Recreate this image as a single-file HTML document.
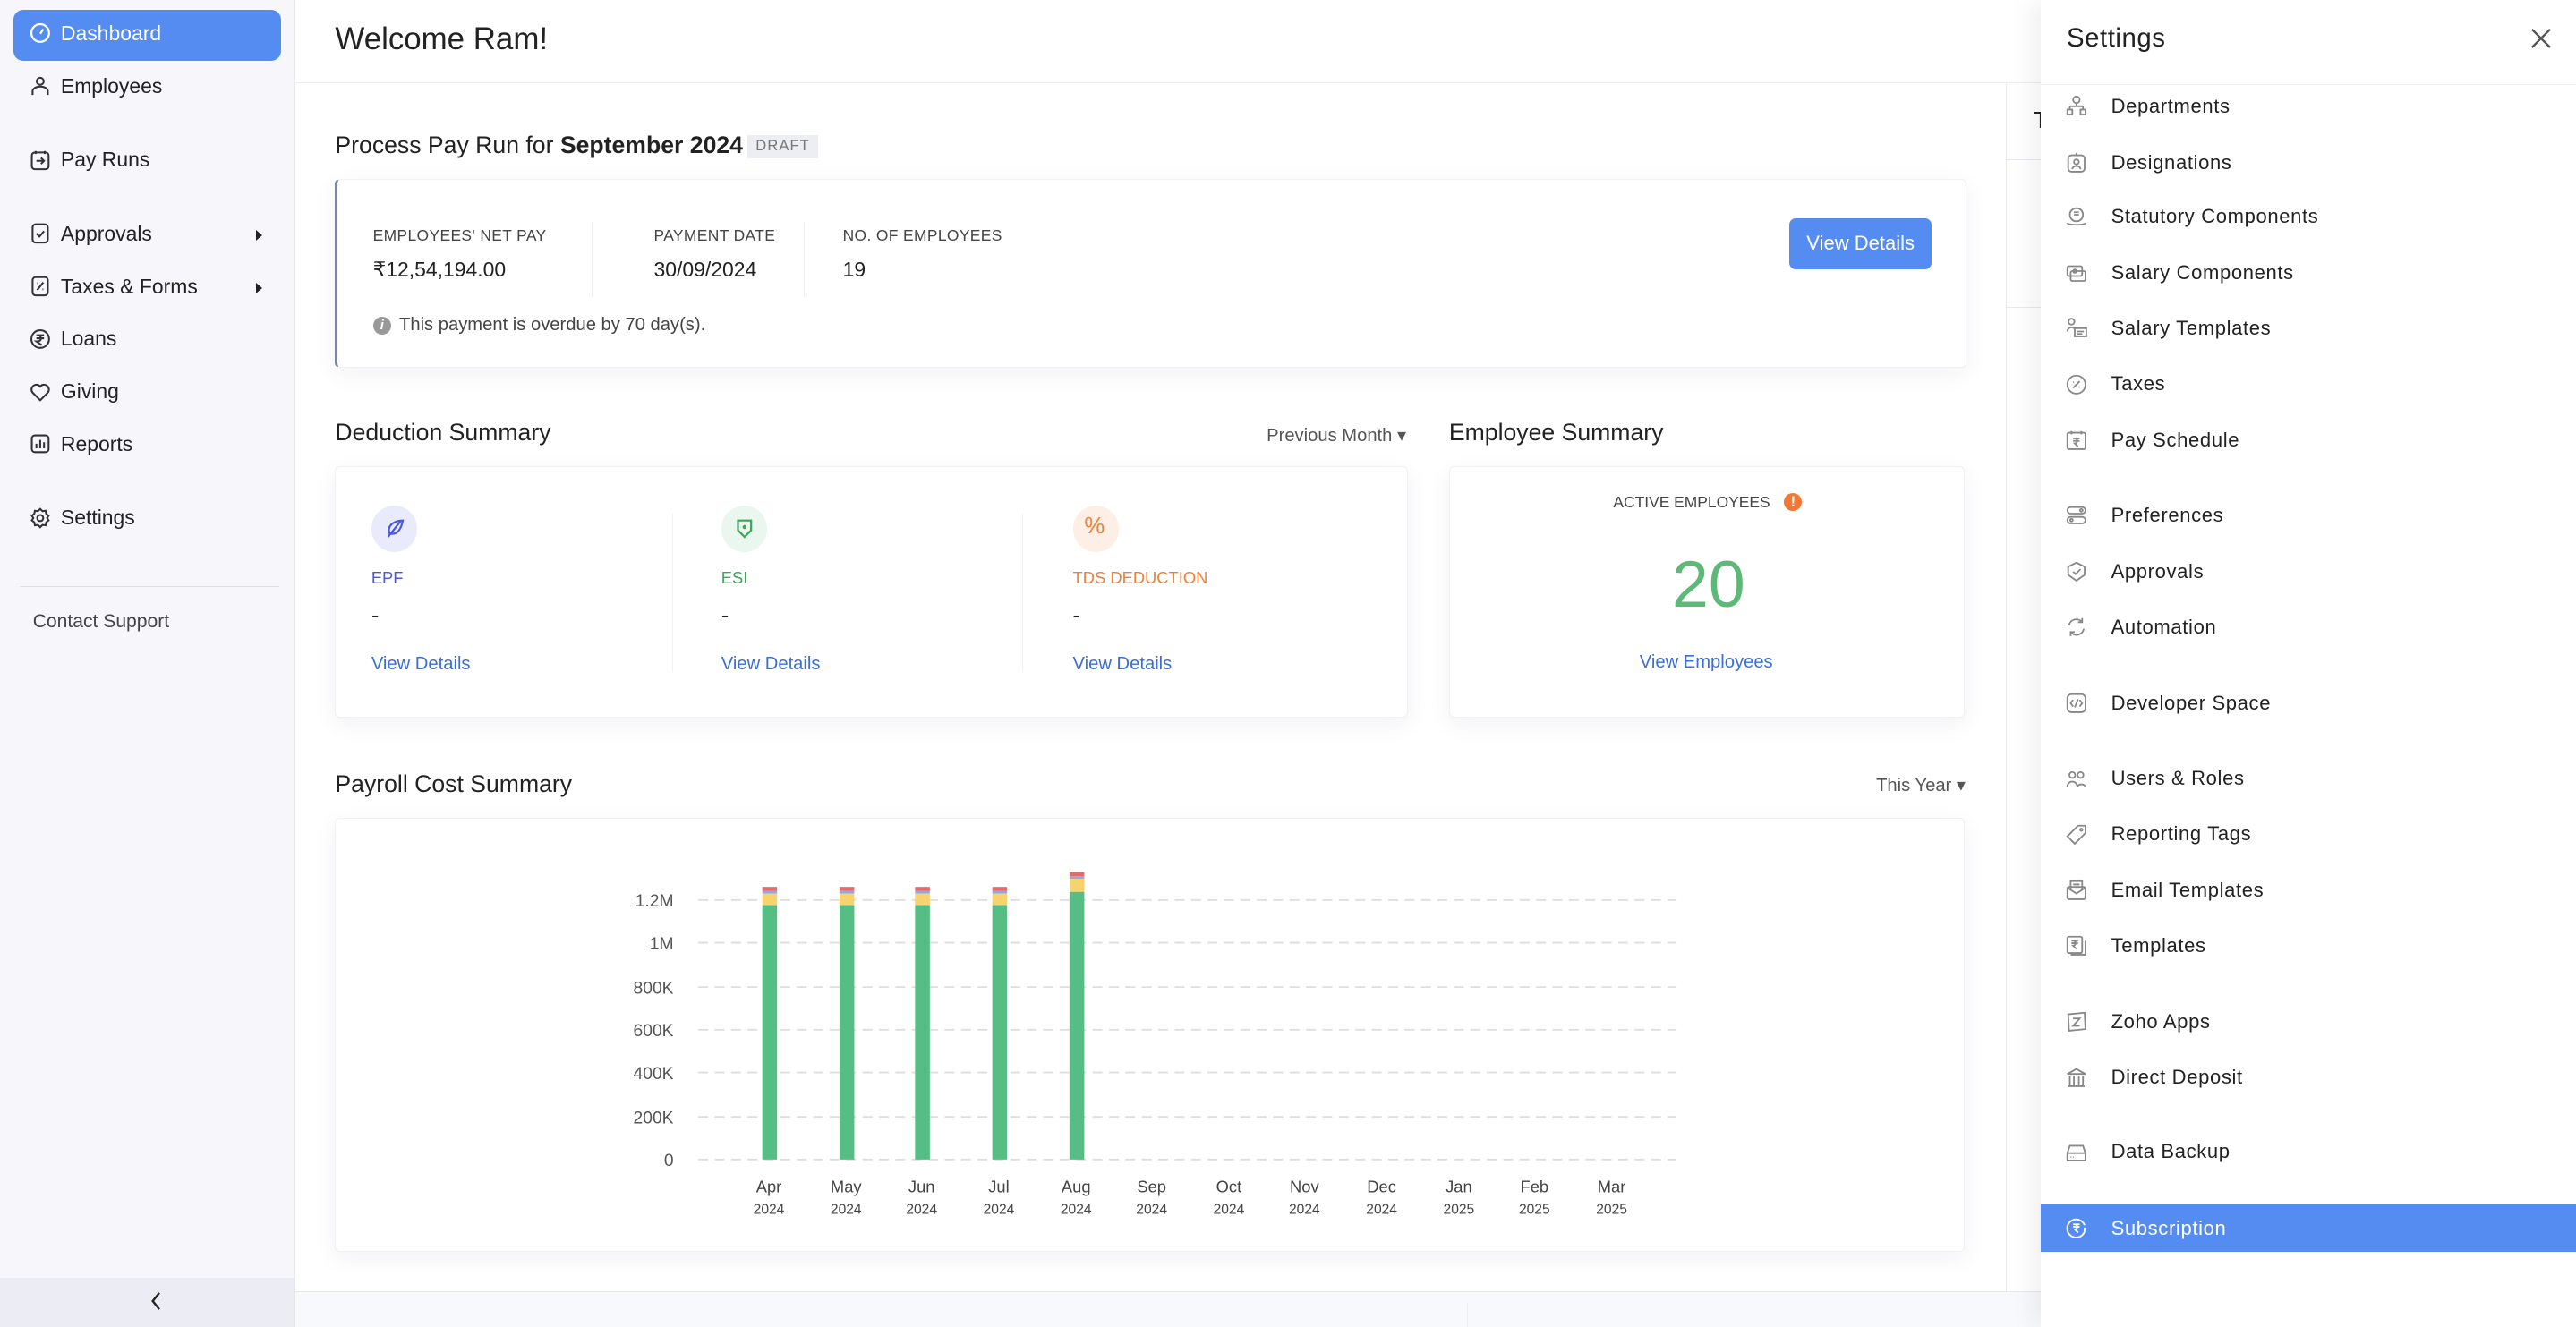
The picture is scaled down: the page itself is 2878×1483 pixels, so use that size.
<!DOCTYPE html>
<html><head><meta charset="utf-8">
<style>
html,body{margin:0;padding:0;}
body{width:2878px;height:1482px;overflow:hidden;background:#fff;font-family:"Liberation Sans",sans-serif;}
#z{zoom:1.83546;width:1568px;height:808px;position:relative;overflow:hidden;color:#222;}
.a{position:absolute;white-space:nowrap;}
.side{left:0;top:0;width:179px;height:808px;background:#f6f6fb;border-right:1px solid #e6e7ee;}
.nav{position:absolute;left:20px;font-size:12.5px;color:#222;display:flex;align-items:center;}
.nav svg{width:13px;height:13px;margin-right:6px;}
.arr{position:absolute;left:156px;width:0;height:0;border-left:4px solid #222;border-top:3.5px solid transparent;border-bottom:3.5px solid transparent;}
.card{position:absolute;background:#fff;border-radius:3px;box-shadow:0 4px 14px rgba(30,40,90,0.06);border:1px solid #f0f1f5;}
.lbl{font-size:9.5px;color:#444;letter-spacing:.2px;}
.val{font-size:12.5px;color:#222;}
.link{font-size:11px;color:#3a6fd8;}
.h2{font-size:14.5px;color:#222;}
.sp{position:absolute;left:0;width:326px;font-size:12px;color:#222;letter-spacing:.35px;display:flex;align-items:center;height:30px;}
.sp svg{position:absolute;left:15px;width:14px;height:14px;}
.sp span{position:absolute;left:43px;}
</style></head><body><div id="z">

<div class="a side"></div>
<div class="a" style="left:8px;top:6px;width:163px;height:31px;background:#558cf1;border-radius:6px;"></div>
<div class="nav" style="top:13px;left:18px;color:#fff"><svg viewBox="0 0 14 14" fill="none" stroke="#fff" stroke-width="1.3"><circle cx="7" cy="7" r="5.8"/><path d="M7 7.5 9 4.5"/></svg>Dashboard</div>
<div class="nav" style="top:45px;left:18px"><svg viewBox="0 0 14 14" fill="none" stroke="#333" stroke-width="1.2"><circle cx="7" cy="4" r="2.3"/><path d="M2 13v-2.5a5 3 0 0 1 10 0V13"/></svg>Employees</div>
<div class="nav" style="top:90px;left:18px"><svg viewBox="0 0 14 14" fill="none" stroke="#333" stroke-width="1.2"><rect x="1.5" y="2" width="11" height="11" rx="2"/><path d="M4 1v2M10 1v2M4.5 7.5h5M7.5 5.5l2 2-2 2"/></svg>Pay Runs</div>
<div class="nav" style="top:135px;left:18px"><svg viewBox="0 0 14 14" fill="none" stroke="#333" stroke-width="1.2"><rect x="2" y="1" width="10" height="12" rx="2"/><path d="M4.5 7l2 2 3-3.5"/></svg>Approvals</div><div class="arr" style="top:140px"></div>
<div class="nav" style="top:167px;left:18px"><svg viewBox="0 0 14 14" fill="none" stroke="#333" stroke-width="1.2"><rect x="2" y="1" width="10" height="12" rx="2"/><path d="M5 9.5l4-5M5 5h.5M8.5 9h.5"/></svg>Taxes &amp; Forms</div><div class="arr" style="top:172px"></div>
<div class="nav" style="top:199px;left:18px"><svg viewBox="0 0 14 14" fill="none" stroke="#333" stroke-width="1.2"><circle cx="7" cy="7" r="5.8"/><path d="M4.5 4.5h5M4.5 6.5h5M5.5 4.5a2 2 0 0 1 0 4H4.5l3.5 2.5"/></svg>Loans</div>
<div class="nav" style="top:231px;left:18px"><svg viewBox="0 0 14 14" fill="none" stroke="#333" stroke-width="1.2"><path d="M7 12.5 2 7.5a3 3 0 0 1 5-4 3 3 0 0 1 5 4z"/></svg>Giving</div>
<div class="nav" style="top:263px;left:18px"><svg viewBox="0 0 14 14" fill="none" stroke="#333" stroke-width="1.2"><rect x="1.5" y="1.5" width="11" height="11" rx="2"/><path d="M4.5 10V7M7 10V4.5M9.5 10V6"/></svg>Reports</div>
<div class="nav" style="top:308px;left:18px"><svg viewBox="0 0 14 14" fill="none" stroke="#333" stroke-width="1.2"><circle cx="7" cy="7" r="2"/><path d="M7 1l1.5 1.5 2-.3.4 2 1.6 1.3-1 1.5 1 1.5-1.6 1.3-.4 2-2-.3L7 13l-1.5-1.5-2 .3-.4-2L1.5 8.5l1-1.5-1-1.5 1.6-1.3.4-2 2 .3z"/></svg>Settings</div>
<div class="a" style="left:12px;top:357px;width:158px;border-top:1px solid #dfe0e8"></div>
<div class="a" style="left:20px;top:372px;font-size:11.5px;color:#444">Contact Support</div>
<div class="a" style="left:0;top:778px;width:179px;height:30px;background:#ececf4;border-right:1px solid #e6e7ee"></div>
<svg class="a" style="left:91px;top:786px" width="8" height="12" viewBox="0 0 8 12" fill="none" stroke="#222" stroke-width="1.3"><path d="M6 1 2 6l4 5"/></svg>

<div class="a" style="left:204px;top:13px;font-size:19px;color:#222">Welcome Ram!</div>
<div class="a" style="left:180px;top:50px;width:1062px;border-top:1px solid #ececf1"></div>
<div class="a" style="left:1221px;top:51px;height:735px;border-left:1px solid #e8e8ee"></div>
<div class="a" style="left:1221px;top:97px;width:21px;border-top:1px solid #e8e8ee"></div>
<div class="a" style="left:1221px;top:187px;width:21px;border-top:1px solid #e8e8ee"></div>
<div class="a" style="left:1238px;top:66px;font-size:14px;color:#222">T</div>

<div class="a" style="left:204px;top:80px;font-size:14.5px;color:#222">Process Pay Run for <b style="font-weight:600">September 2024</b></div>
<div class="a" style="left:455px;top:82px;padding:2px 5px;background:#eceef3;color:#777;font-size:9px;letter-spacing:.6px">DRAFT</div>
<div class="card" style="left:204px;top:109px;width:991px;height:114px;border-left:2px solid #7c869c;"></div>
<div class="a lbl" style="left:227px;top:138px">EMPLOYEES' NET PAY</div>
<div class="a val" style="left:227px;top:157px">₹12,54,194.00</div>
<div class="a" style="left:360px;top:135px;height:46px;border-left:1px solid #eceef2"></div>
<div class="a lbl" style="left:398px;top:138px">PAYMENT DATE</div>
<div class="a val" style="left:398px;top:157px">30/09/2024</div>
<div class="a" style="left:489px;top:135px;height:46px;border-left:1px solid #eceef2"></div>
<div class="a lbl" style="left:513px;top:138px">NO. OF EMPLOYEES</div>
<div class="a val" style="left:513px;top:157px">19</div>
<div class="a" style="left:1089px;top:133px;width:87px;height:31px;background:#558cf1;border-radius:4px;color:#fff;font-size:12px;line-height:31px;text-align:center">View Details</div>
<div class="a" style="left:227px;top:193px;width:11px;height:11px;border-radius:50%;background:#999;color:#fff;font-size:8px;line-height:11px;text-align:center;font-style:italic;font-weight:bold">i</div>
<div class="a" style="left:243px;top:192px;font-size:11px;color:#444">This payment is overdue by 70 day(s).</div>

<div class="a h2" style="left:204px;top:255px">Deduction Summary</div>
<div class="a" style="left:771px;top:258px;font-size:11px;color:#555">Previous Month ▾</div>
<div class="card" style="left:204px;top:284px;width:652px;height:152px"></div>
<div class="a" style="left:409px;top:313px;height:96px;border-left:1px solid #f0f1f4"></div>
<div class="a" style="left:622px;top:313px;height:96px;border-left:1px solid #f0f1f4"></div>
<div class="a" style="left:226px;top:308px;width:28px;height:28px;border-radius:50%;background:#e9ebfd"></div>
<svg class="a" style="left:233px;top:315px" width="14" height="14" viewBox="0 0 14 14" fill="none" stroke="#4b55e6" stroke-width="1.2"><path d="M3 12 11 2M4 10c-2-5 3-8 8-8-1 5-3 9-8 8z"/></svg>
<div class="a" style="left:439px;top:308px;width:28px;height:28px;border-radius:50%;background:#eaf7ee"></div>
<svg class="a" style="left:446px;top:315px" width="14" height="14" viewBox="0 0 14 14" fill="none" stroke="#3fa45a" stroke-width="1.2"><path d="M3 2h8v6l-4 4-4-4z"/><circle cx="7" cy="6" r=".6" fill="#3fa45a"/></svg>
<div class="a" style="left:653px;top:308px;width:28px;height:28px;border-radius:50%;background:#fdeee6"></div>
<div class="a" style="left:660px;top:313px;font-size:14px;color:#ef7f3a">%</div>
<div class="a" style="left:226px;top:346px;font-size:10px;color:#4b55e6">EPF</div>
<div class="a" style="left:439px;top:346px;font-size:10px;color:#3fa45a">ESI</div>
<div class="a" style="left:653px;top:346px;font-size:10px;color:#ef7f3a">TDS DEDUCTION</div>
<div class="a" style="left:226px;top:367px;font-size:14px">-</div>
<div class="a" style="left:439px;top:367px;font-size:14px">-</div>
<div class="a" style="left:653px;top:367px;font-size:14px">-</div>
<div class="a link" style="left:226px;top:398px">View Details</div>
<div class="a link" style="left:439px;top:398px">View Details</div>
<div class="a link" style="left:653px;top:398px">View Details</div>

<div class="a h2" style="left:882px;top:255px">Employee Summary</div>
<div class="card" style="left:882px;top:284px;width:313px;height:152px"></div>
<div class="a" style="left:982px;top:300px;font-size:9.5px;color:#444;letter-spacing:0">ACTIVE EMPLOYEES</div>
<div class="a" style="left:1086px;top:300px;width:11px;height:11px;border-radius:50%;background:#ef7836;color:#fff;font-size:9px;line-height:11px;text-align:center;font-weight:bold">!</div>
<div class="a" style="left:1000px;top:333px;width:80px;text-align:center;font-size:40px;color:#5cb977">20</div>
<div class="a link" style="left:998px;top:397px">View Employees</div>

<div class="a h2" style="left:204px;top:469px">Payroll Cost Summary</div>
<div class="a" style="left:1142px;top:471px;font-size:11px;color:#555">This Year ▾</div>
<div class="card" style="left:204px;top:498px;width:991px;height:263px"></div>
<svg class="a" style="left:0;top:0" width="1240" height="780" font-family="Liberation Sans, sans-serif">
<g stroke="#dedede" stroke-width="1" stroke-dasharray="6,4">
<line x1="425" y1="548" x2="1020" y2="548"/><line x1="425" y1="574" x2="1020" y2="574"/><line x1="425" y1="601" x2="1020" y2="601"/><line x1="425" y1="627" x2="1020" y2="627"/><line x1="425" y1="653" x2="1020" y2="653"/><line x1="425" y1="680" x2="1020" y2="680"/><line x1="425" y1="706" x2="1020" y2="706"/>
</g>
<g font-size="10.5" fill="#555" text-anchor="end">
<text x="410" y="552">1.2M</text><text x="410" y="578">1M</text><text x="410" y="605">800K</text><text x="410" y="631">600K</text><text x="410" y="657">400K</text><text x="410" y="684">200K</text><text x="410" y="710">0</text>
</g>
<g>
<rect x="464" y="551" width="9" height="155" fill="#56be84"/><rect x="464" y="544" width="9" height="7" fill="#f7d36f"/><rect x="464" y="542.5" width="9" height="1.5" fill="#8fa8ea"/><rect x="464" y="540" width="9" height="2.5" fill="#e66a6a"/>
<rect x="511" y="551" width="9" height="155" fill="#56be84"/><rect x="511" y="544" width="9" height="7" fill="#f7d36f"/><rect x="511" y="542.5" width="9" height="1.5" fill="#8fa8ea"/><rect x="511" y="540" width="9" height="2.5" fill="#e66a6a"/>
<rect x="557" y="551" width="9" height="155" fill="#56be84"/><rect x="557" y="544" width="9" height="7" fill="#f7d36f"/><rect x="557" y="542.5" width="9" height="1.5" fill="#8fa8ea"/><rect x="557" y="540" width="9" height="2.5" fill="#e66a6a"/>
<rect x="604" y="551" width="9" height="155" fill="#56be84"/><rect x="604" y="544" width="9" height="7" fill="#f7d36f"/><rect x="604" y="542.5" width="9" height="1.5" fill="#8fa8ea"/><rect x="604" y="540" width="9" height="2.5" fill="#e66a6a"/>
<rect x="651" y="543" width="9" height="163" fill="#56be84"/><rect x="651" y="535" width="9" height="8" fill="#f7d36f"/><rect x="651" y="533.5" width="9" height="1.5" fill="#8fa8ea"/><rect x="651" y="531" width="9" height="2.5" fill="#e66a6a"/>
</g>
<g font-size="10" fill="#444" text-anchor="middle">
<text x="468" y="726">Apr</text><text x="515" y="726">May</text><text x="561" y="726">Jun</text><text x="608" y="726">Jul</text><text x="655" y="726">Aug</text><text x="701" y="726">Sep</text><text x="748" y="726">Oct</text><text x="794" y="726">Nov</text><text x="841" y="726">Dec</text><text x="888" y="726">Jan</text><text x="934" y="726">Feb</text><text x="981" y="726">Mar</text>
</g>
<g font-size="8.5" fill="#444" text-anchor="middle">
<text x="468" y="739">2024</text><text x="515" y="739">2024</text><text x="561" y="739">2024</text><text x="608" y="739">2024</text><text x="655" y="739">2024</text><text x="701" y="739">2024</text><text x="748" y="739">2024</text><text x="794" y="739">2024</text><text x="841" y="739">2024</text><text x="888" y="739">2025</text><text x="934" y="739">2025</text><text x="981" y="739">2025</text>
</g>
</svg>

<div class="a" style="left:180px;top:786px;width:1062px;height:22px;background:#f8f9fd;border-top:1px solid #e6e8ee"></div>
<div class="a" style="left:893px;top:793px;height:15px;border-left:1px solid #eceef2"></div>

<div class="a" style="left:1242px;top:0;width:326px;height:808px;background:#fff;box-shadow:-6px 0 14px rgba(0,0,0,0.06)"></div>
<div class="a" style="left:1258px;top:14px;font-size:16px;color:#222;letter-spacing:.3px">Settings</div>
<svg class="a" style="left:1540px;top:17px" width="13" height="13" viewBox="0 0 13 13" stroke="#555" stroke-width="1.3"><path d="M1 1l11 11M12 1 1 12"/></svg>
<div class="a" style="left:1242px;top:51px;width:326px;border-top:1px solid #ececf1"></div>
<div class="a" style="left:1242px;top:733px;width:326px;height:29px;background:#558cf1"></div>

<div class="a" style="left:1242px;top:0;width:326px;height:808px">
<div class="sp" style="top:50px"><svg viewBox="0 0 14 14" fill="none" stroke="#888" stroke-width="1"><circle cx="7" cy="3" r="2"/><path d="M7 5v2M3 7h8M3 7v2M11 7v2"/><rect x="1.5" y="9" width="3" height="3"/><rect x="9.5" y="9" width="3" height="3"/></svg><span>Departments</span></div>
<div class="sp" style="top:84px"><svg viewBox="0 0 14 14" fill="none" stroke="#888" stroke-width="1"><rect x="2" y="2.5" width="10" height="10" rx="2"/><circle cx="7" cy="6.5" r="1.5"/><path d="M4.5 11a2.5 2 0 0 1 5 0M7 1v1.5"/></svg><span>Designations</span></div>
<div class="sp" style="top:117px"><svg viewBox="0 0 14 14" fill="none" stroke="#888" stroke-width="1"><circle cx="7" cy="6" r="4"/><path d="M1.5 11c0 1.5 11 1.5 11 0M5.5 4.5h3M5.5 6h3"/></svg><span>Statutory Components</span></div>
<div class="sp" style="top:151px"><svg viewBox="0 0 14 14" fill="none" stroke="#888" stroke-width="1"><rect x="1.5" y="3" width="9" height="6" rx="1"/><rect x="3.5" y="6" width="9" height="6" rx="1"/><circle cx="6" cy="6" r="1"/></svg><span>Salary Components</span></div>
<div class="sp" style="top:185px"><svg viewBox="0 0 14 14" fill="none" stroke="#888" stroke-width="1"><circle cx="4" cy="3" r="1.8"/><path d="M1.5 9a2.5 2.5 0 0 1 4 -2"/><rect x="6" y="7" width="7" height="5"/><path d="M7.5 9h4M7.5 10.5h3"/></svg><span>Salary Templates</span></div>
<div class="sp" style="top:219px"><svg viewBox="0 0 14 14" fill="none" stroke="#888" stroke-width="1"><circle cx="7" cy="7" r="5.5"/><path d="M5 9l4-4M5 5.5h.5M8.5 8.5h.5"/></svg><span>Taxes</span></div>
<div class="sp" style="top:253px"><svg viewBox="0 0 14 14" fill="none" stroke="#888" stroke-width="1"><rect x="1.5" y="2.5" width="11" height="10" rx="1"/><path d="M4 1.5v2M10 1.5v2M5 6h4M5 7.5h4M6 6a1.5 1.5 0 0 1 0 3l2 2"/></svg><span>Pay Schedule</span></div>
<div class="sp" style="top:299px"><svg viewBox="0 0 14 14" fill="none" stroke="#888" stroke-width="1"><rect x="1.5" y="2" width="11" height="4" rx="2"/><rect x="1.5" y="8" width="11" height="4" rx="2"/><circle cx="10" cy="4" r=".8"/><circle cx="4" cy="10" r=".8"/></svg><span>Preferences</span></div>
<div class="sp" style="top:333px"><svg viewBox="0 0 14 14" fill="none" stroke="#888" stroke-width="1"><path d="M7 1.5l5 2.5v5L7 12.5 2 9V4z"/><path d="M5 7l1.5 1.5L9.5 5.5"/></svg><span>Approvals</span></div>
<div class="sp" style="top:367px"><svg viewBox="0 0 14 14" fill="none" stroke="#888" stroke-width="1"><path d="M2.5 6a4.5 4.5 0 0 1 8-2M11.5 8a4.5 4.5 0 0 1-8 2M10.5 1.5v2.5H8M3.5 12.5V10H6"/></svg><span>Automation</span></div>
<div class="sp" style="top:413px"><svg viewBox="0 0 14 14" fill="none" stroke="#888" stroke-width="1"><rect x="1.5" y="1.5" width="11" height="11" rx="2.5"/><path d="M5 5 3.5 7 5 9M9 5l1.5 2L9 9M8 4.5 6 9.5"/></svg><span>Developer Space</span></div>
<div class="sp" style="top:459px"><svg viewBox="0 0 14 14" fill="none" stroke="#888" stroke-width="1"><circle cx="4.5" cy="5" r="1.8"/><circle cx="9.5" cy="5" r="1.8"/><path d="M1.5 12a3 3 0 0 1 6 0M7.5 12a3 3 0 0 1 5 0"/></svg><span>Users &amp; Roles</span></div>
<div class="sp" style="top:493px"><svg viewBox="0 0 14 14" fill="none" stroke="#888" stroke-width="1"><path d="M8 1.5h4.5V6L6 12.5 1.5 8z"/><circle cx="10" cy="4" r=".7"/></svg><span>Reporting Tags</span></div>
<div class="sp" style="top:527px"><svg viewBox="0 0 14 14" fill="none" stroke="#888" stroke-width="1"><rect x="1.5" y="5" width="11" height="7.5" rx="1"/><path d="M1.5 5.5 7 9l5.5-3.5M3.5 7V1.5h7V7M5 3.5h4"/></svg><span>Email Templates</span></div>
<div class="sp" style="top:561px"><svg viewBox="0 0 14 14" fill="none" stroke="#888" stroke-width="1"><rect x="1.5" y="1.5" width="9" height="10" rx="1"/><path d="M12.5 4v8.5h-9M4 4h4M4 5.5h4M5 4a1.5 1.5 0 0 1 0 3l2 2"/></svg><span>Templates</span></div>
<div class="sp" style="top:607px"><svg viewBox="0 0 14 14" fill="none" stroke="#888" stroke-width="1"><path d="M2 2.5l10-1 .5 10-10 1z"/><path d="M5 5h4L5 9.5h4"/></svg><span>Zoho Apps</span></div>
<div class="sp" style="top:641px"><svg viewBox="0 0 14 14" fill="none" stroke="#888" stroke-width="1"><path d="M1.5 5 7 2l5.5 3zM2 12.5h10M3 6v6M5.5 6v6M8.5 6v6M11 6v6"/></svg><span>Direct Deposit</span></div>
<div class="sp" style="top:686px"><svg viewBox="0 0 14 14" fill="none" stroke="#888" stroke-width="1"><path d="M1.5 8 3 3.5h8L12.5 8v4.5h-11zM1.5 8h11"/><path d="M3.5 10.5h.5M5 10.5h.5"/></svg><span>Data Backup</span></div>
<div class="sp" style="top:733px;color:#fff"><svg viewBox="0 0 14 14" fill="none" stroke="#fff" stroke-width="1"><path d="M12 5a5.5 5.5 0 1 0 0 4M12 9v-2.5M5 4.5h4M5 6h4M6 4.5a1.5 1.5 0 0 1 0 3l2 2"/></svg><span>Subscription</span></div>
</div>

</div></body></html>
